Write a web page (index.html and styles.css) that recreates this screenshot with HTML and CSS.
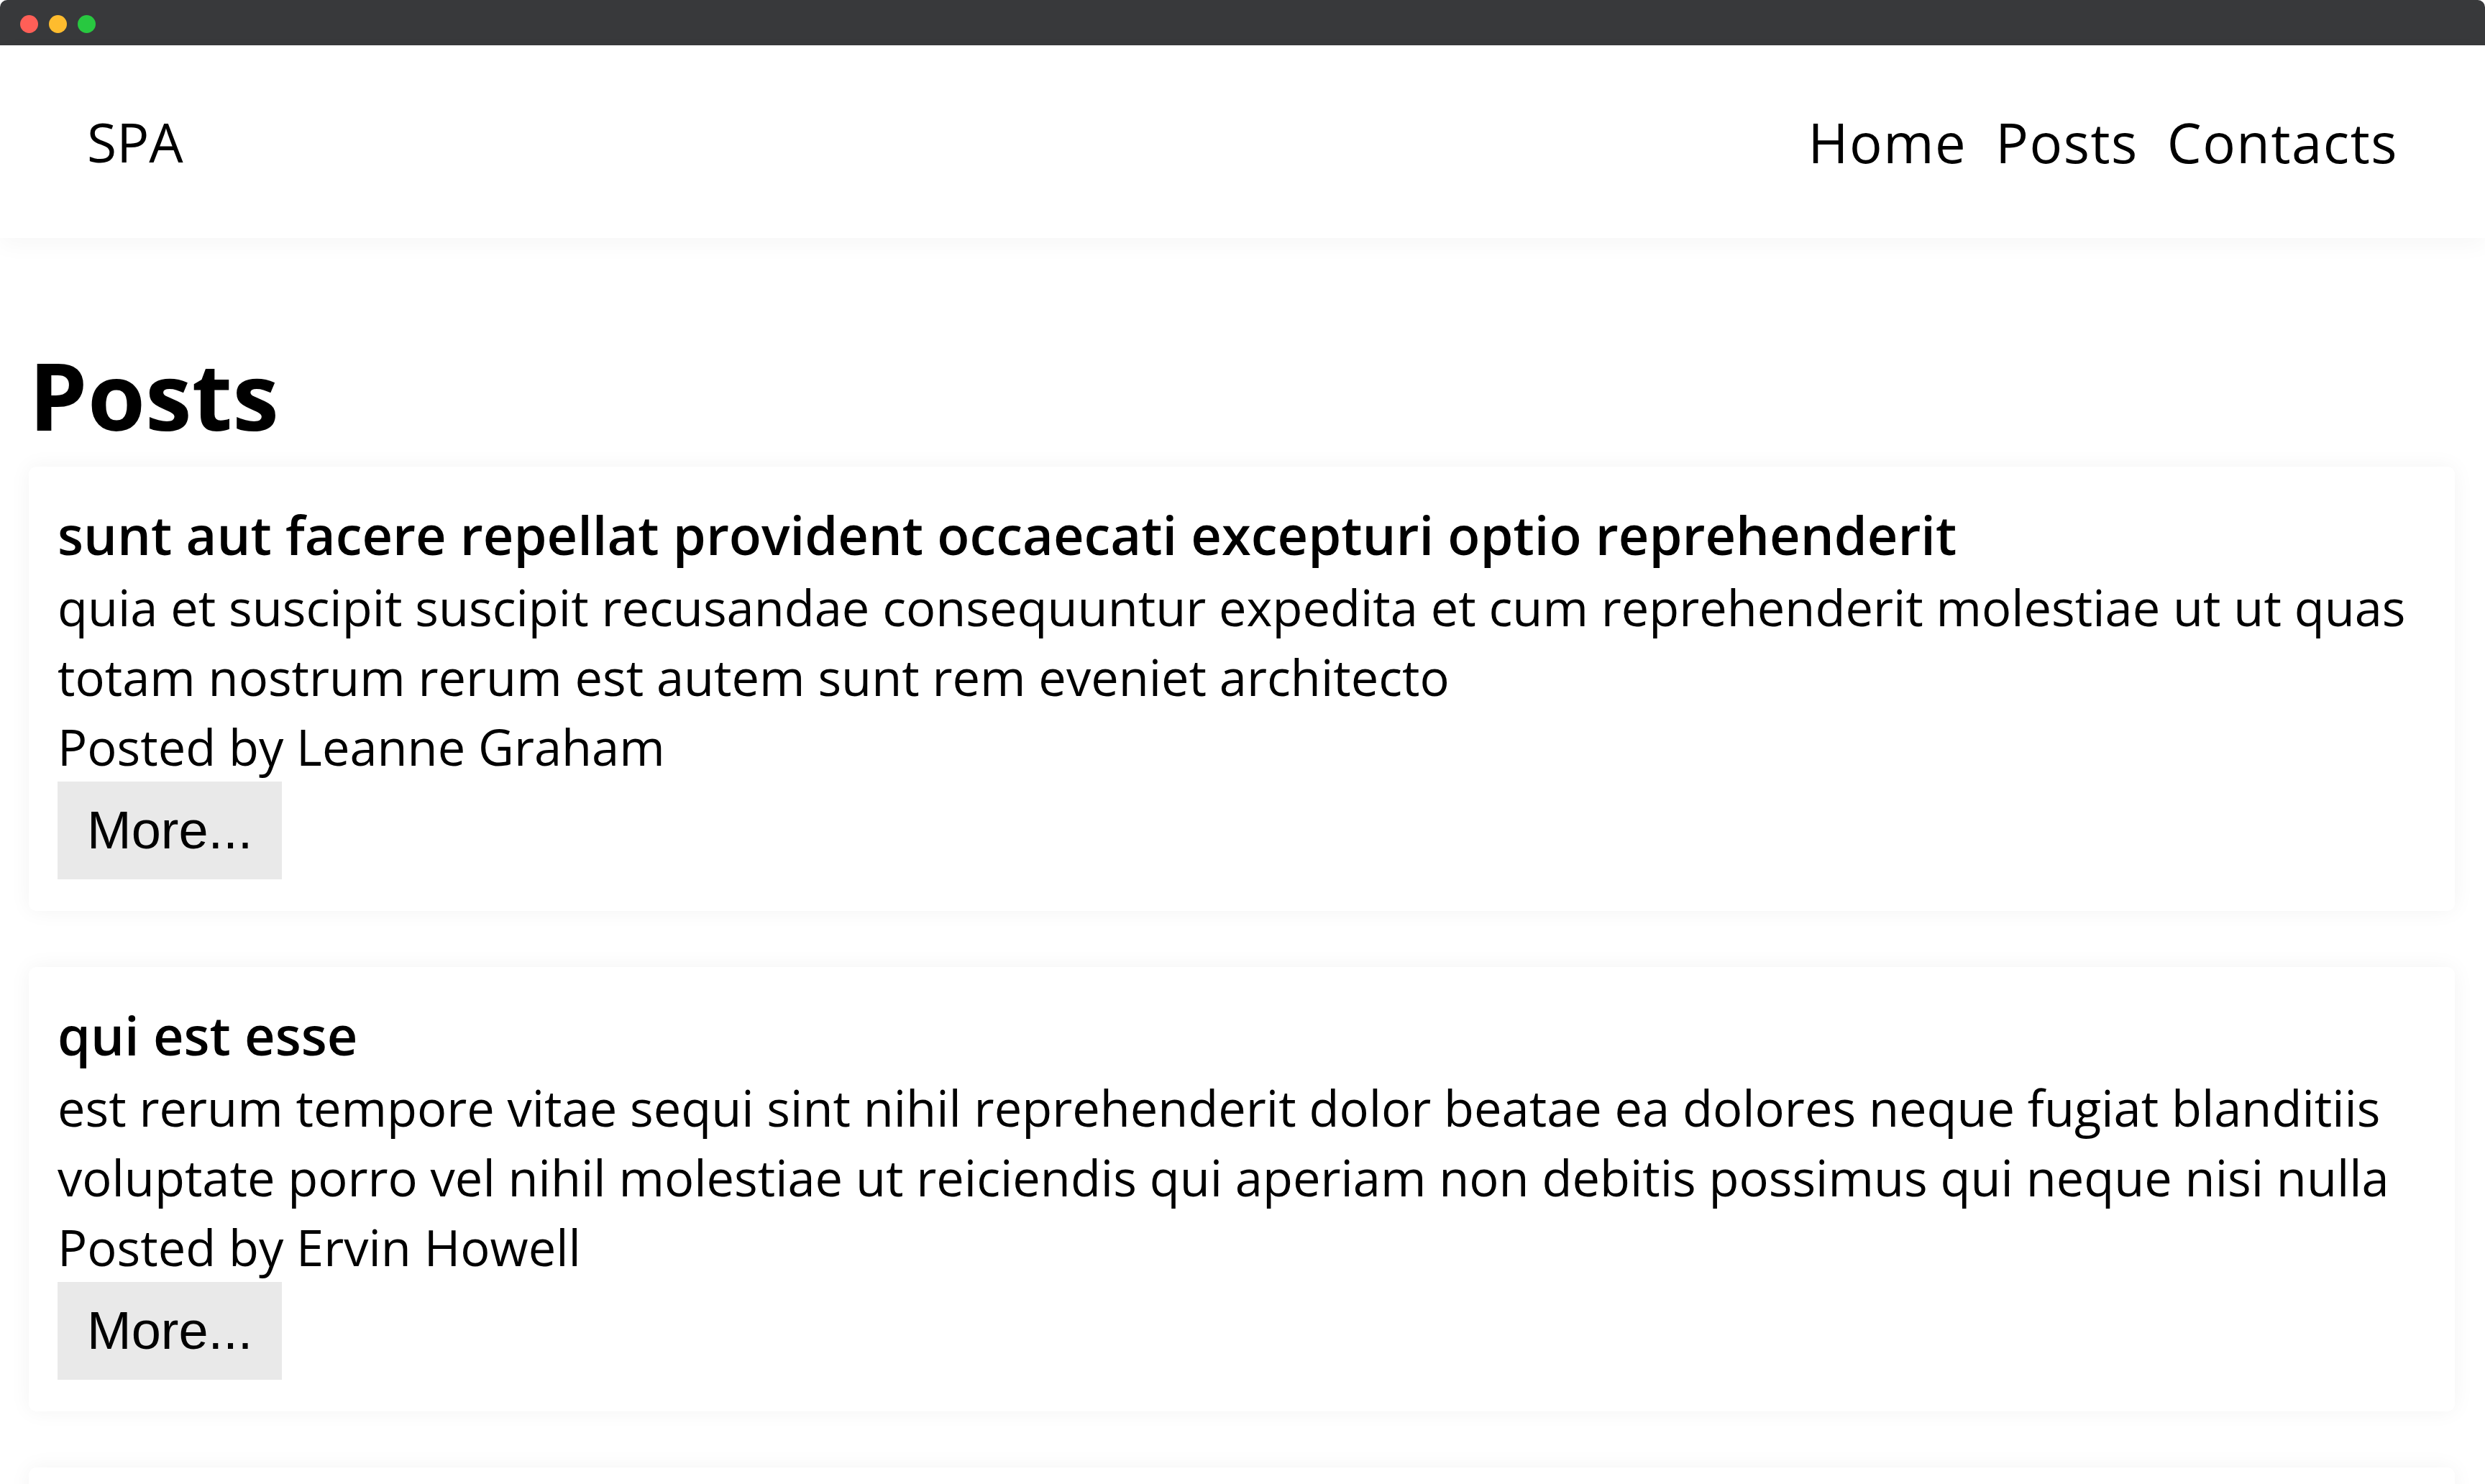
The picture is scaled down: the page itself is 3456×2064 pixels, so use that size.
FILE: index.html
```html
<!DOCTYPE html>
<html lang="en">
<head>
<meta charset="utf-8">
<title>SPA</title>
<link rel="stylesheet" href="styles.css">
</head>
<body>
<div class="window">
  <div class="titlebar">
    <span class="dot dot-red"></span>
    <span class="dot dot-yellow"></span>
    <span class="dot dot-green"></span>
  </div>
  <header class="site-header">
    <a class="brand" href="#">SPA</a>
    <nav class="nav">
      <a href="#">Home</a>
      <a href="#">Posts</a>
      <a href="#">Contacts</a>
    </nav>
  </header>
  <main class="content">
    <h1 class="page-title">Posts</h1>
    <div class="posts">
      <article class="post">
        <h2 class="post-title">sunt aut facere repellat provident occaecati excepturi optio reprehenderit</h2>
        <p class="post-body">quia et suscipit suscipit recusandae consequuntur expedita et cum reprehenderit molestiae ut ut quas totam nostrum rerum est autem sunt rem eveniet architecto</p>
        <p class="post-author">Posted by Leanne Graham</p>
        <button class="more-btn">More...</button>
      </article>
      <article class="post">
        <h2 class="post-title">qui est esse</h2>
        <p class="post-body">est rerum tempore vitae sequi sint nihil reprehenderit dolor beatae ea dolores neque fugiat blanditiis voluptate porro vel nihil molestiae ut reiciendis qui aperiam non debitis possimus qui neque nisi nulla</p>
        <p class="post-author">Posted by Ervin Howell</p>
        <button class="more-btn">More...</button>
      </article>
      <article class="post">
        <h2 class="post-title">ea molestias quasi exercitationem repellat qui ipsa sit aut</h2>
        <p class="post-body">et iusto sed quo iure voluptatem occaecati omnis eligendi aut ad voluptatem doloribus vel accusantium quis pariatur molestiae porro eius odio et labore et velit aut</p>
        <p class="post-author">Posted by Clementine Bauch</p>
        <button class="more-btn">More...</button>
      </article>
    </div>
  </main>
</div>
</body>
</html>
```
FILE: styles.css
```css
html, body {
  margin: 0;
  padding: 0;
  background: #ffffff;
}

body {
  font-family: "Open Sans", "Noto Sans", sans-serif;
  color: #000;
  height: 2064px;
  overflow: hidden;
}

.titlebar {
  height: 63px;
  background: #38393b;
  display: flex;
  align-items: center;
  gap: 15px;
  padding: 4px 0 0 28px;
  box-sizing: border-box;
  border-radius: 10px 10px 0 0;
}

.dot {
  width: 25px;
  height: 25px;
  border-radius: 50%;
  display: block;
}

.dot-red { background: #ff5f57; }
.dot-yellow { background: #febc2e; }
.dot-green { background: #28c840; }

.site-header {
  height: 268px;
  display: flex;
  align-items: center;
  justify-content: space-between;
  padding: 0 121px;
  background: #fff;
  box-shadow: 0 10px 30px rgba(0, 0, 0, 0.035);
  position: relative;
}

.brand {
  font-size: 75px;
  color: #000;
  text-decoration: none;
}

.nav {
  display: flex;
  gap: 40px;
}

.nav a {
  font-size: 76px;
  letter-spacing: 1.5px;
  color: #000;
  text-decoration: none;
}

.content {
  padding: 140px 42px 0 40px;
}

.page-title {
  font-size: 130px;
  font-weight: 700;
  line-height: 156px;
  margin: 0 0 22px;
}

.posts {
  display: flex;
  flex-direction: column;
  gap: 78px;
}

.post {
  background: #fff;
  border-radius: 10px;
  box-shadow: 0 0 30px rgba(0, 0, 0, 0.05);
  padding: 42px 40px 44px;
}

.post-title {
  font-size: 74px;
  font-weight: 600;
  line-height: 105px;
  margin: 0;
}

.post-body,
.post-author {
  font-size: 68.6px;
  line-height: 97px;
  margin: 0;
}

.more-btn {
  display: block;
  font-family: "Liberation Sans", Arial, sans-serif;
  font-size: 74px;
  line-height: 86px;
  padding: 25px 41px;
  border: none;
  border-radius: 0;
  background: #e9e9e9;
  color: #000;
}
```
